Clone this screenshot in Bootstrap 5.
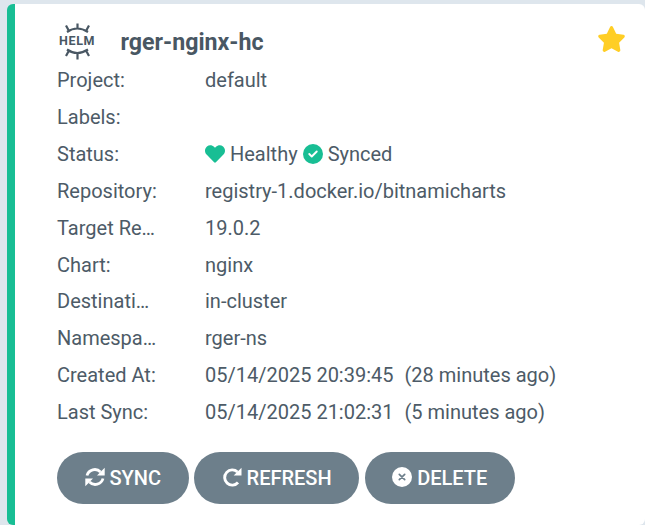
<!DOCTYPE html>
<html lang="en">
<head>
<meta charset="utf-8">
<meta name="viewport" content="width=device-width, initial-scale=1">
<title>rger-nginx-hc</title>
<link href="https://cdn.jsdelivr.net/npm/bootstrap@5.3.0/dist/css/bootstrap.min.css" rel="stylesheet">
<style>
body{background:#dee6ed;font-family:Roboto,"Liberation Sans",sans-serif;font-size:20px;color:#4d5b67;height:525px;overflow:hidden}
.app-tile{margin:4px 0 0 7px;height:521px;border-left:8px solid #18be94;border-radius:6px;padding:18px 19px 0 42px}
.app-head{height:40.300px}
.helm-logo{width:39px;height:40px}
.app-name{font-size:23.2px;font-weight:700;line-height:41px;margin-left:24.500px;color:#495763}
.fav{width:29px;height:26px;margin-top:4px;color:#ffce25}
.info-line{height:36.85px;line-height:36.85px;white-space:nowrap}
.info-label{width:148px;flex:none}
.state-icon{width:20px;height:20px;color:#18be94;margin-right:5px}
.state-sync{margin-left:5px}
.ago{margin-left:11px}
.actions{margin-top:21.700px;gap:5.500px}
.btn-argo{--bs-btn-color:#fff;--bs-btn-bg:#6d7f8b;--bs-btn-border-width:0;--bs-btn-hover-color:#fff;--bs-btn-hover-bg:#5b6c77;height:52px;font-size:20px;font-weight:500;padding:0 27.500px;white-space:nowrap}
.btn-argo svg{width:20px;height:20px;margin-right:5px}
.btn-argo .turn{position:relative;top:-1px}
</style>
</head>
<body>
<main class="app-tile bg-white">
  <header class="app-head d-flex align-items-start">
    <svg class="helm-logo" viewBox="0 0 39 40" fill="none" stroke="#495763" stroke-width="2.2">
      <path d="M10 10Q20 3 31 10M20.500 6.500V1.500M12 9L9 3.500M29 9L32 3.500M10 27.500Q20 34.500 31 27.500M20.500 31V37.500M12 28.500L9 34M29 28.500L32 34"/>
      <text x="2" y="23" fill="#495763" stroke="none" font-family="Roboto,sans-serif" font-weight="700" font-size="12.500" textLength="35.500" lengthAdjust="spacing">HELM</text>
    </svg>
    <h1 class="app-name mb-0">rger-nginx-hc</h1>
    <svg class="fav ms-auto" viewBox="0 0 576 512" fill="currentColor"><path d="M316.9 18C311.6 7 300.4 0 288.100 0s-23.400 7-28.800 18L195 150.300 51.400 171.500c-12 1.800-22 10.200-25.700 21.700s-.7 24.200 7.900 32.700L137.800 329 113.200 474.700c-2 12 3 24.200 12.900 31.300s23 8 33.800 2.300l128.300-68.500 128.300 68.500c10.800 5.700 23.900 4.900 33.800-2.300s14.900-19.300 12.900-31.300L438.500 329 542.700 225.900c8.600-8.500 11.700-21.200 7.900-32.700s-13.700-19.900-25.700-21.700L381.200 150.300z"/></svg>
  </header>
  <section>
    <div class="info-line d-flex"><div class="info-label">Project:</div><div>default</div></div>
    <div class="info-line d-flex"><div class="info-label">Labels:</div></div>
    <div class="info-line d-flex"><div class="info-label">Status:</div>
      <div class="d-flex align-items-center">
        <svg class="state-icon" viewBox="0 0 512 512" fill="currentColor"><path d="M462.3 62.6C407.5 15.9 326 24.3 275.7 76.2L256 96.5l-19.7-20.3C186.1 24.3 104.5 15.9 49.7 62.6c-62.8 53.6-66.1 149.8-9.900 207.900l193.500 199.800c12.500 12.900 32.800 12.900 45.300 0l193.500-199.800c56.300-58.100 53-154.300-9.800-207.900z"/></svg><span>Healthy</span>
        <svg class="state-icon state-sync" viewBox="0 0 512 512"><circle cx="256" cy="256" r="256" fill="currentColor"/><path d="M160 256l64 64 128-128" fill="none" stroke="#fff" stroke-width="48" stroke-linecap="round" stroke-linejoin="round"/></svg><span>Synced</span>
      </div>
    </div>
    <div class="info-line d-flex"><div class="info-label">Repository:</div><div>registry-1.docker.io/bitnamicharts</div></div>
    <div class="info-line d-flex"><div class="info-label">Target Re…</div><div>19.0.2</div></div>
    <div class="info-line d-flex"><div class="info-label">Chart:</div><div>nginx</div></div>
    <div class="info-line d-flex"><div class="info-label">Destinati…</div><div>in-cluster</div></div>
    <div class="info-line d-flex"><div class="info-label">Namespa…</div><div>rger-ns</div></div>
    <div class="info-line d-flex"><div class="info-label">Created At:</div><div>05/14/2025 20:39:45<span class="ago">(28 minutes ago)</span></div></div>
    <div class="info-line d-flex"><div class="info-label">Last Sync:</div><div>05/14/2025 21:02:31<span class="ago">(5 minutes ago)</span></div></div>
  </section>
  <footer class="actions d-flex">
    <button type="button" class="btn btn-argo rounded-pill d-flex align-items-center"><svg class="turn" viewBox="0 0 20 20" fill="none" stroke="currentColor" stroke-width="2.800"><path d="M2 8.500A8 8 0 0 1 15.500 5M18 11.500A8 8 0 0 1 4.500 15"/><path d="M19.700.700v7.800H12zM.3 19.300v-7.800H8z" fill="currentColor" stroke="none"/></svg>SYNC</button>
    <button type="button" class="btn btn-argo rounded-pill d-flex align-items-center"><svg class="turn" viewBox="0 0 20 20" fill="none" stroke="currentColor" stroke-width="2.900"><path d="M15.500 5A7.600 7.600 0 1 0 16 15.500"/><path d="M19.500.700v7.800H11.700z" fill="currentColor" stroke="none"/></svg>REFRESH</button>
    <button type="button" class="btn btn-argo rounded-pill d-flex align-items-center"><svg class="turn" viewBox="0 0 20 20"><circle cx="10" cy="10" r="10" fill="currentColor"/><path d="M7.300 7.300l5.400 5.400M12.700 7.300l-5.400 5.400" stroke="#6d7f8b" stroke-width="1.700" stroke-linecap="round"/></svg>DELETE</button>
  </footer>
</main>
<script src="https://cdn.jsdelivr.net/npm/bootstrap@5.3.0/dist/js/bootstrap.bundle.min.js"></script>
</body>
</html>
